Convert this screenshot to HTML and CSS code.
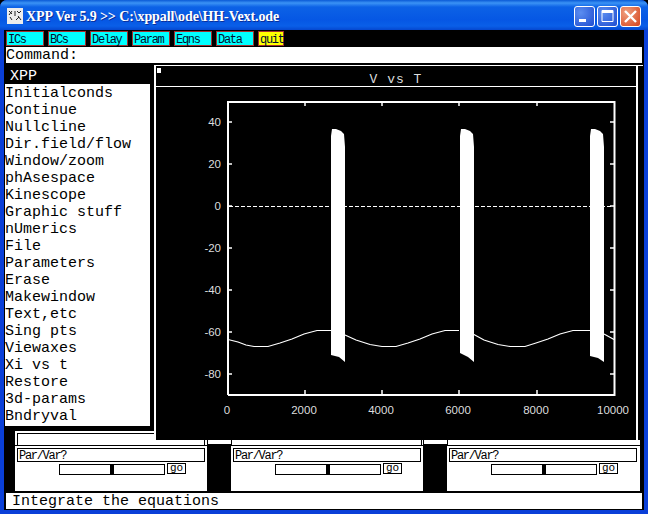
FILE: index.html
```html
<!DOCTYPE html>
<html lang="en">
<head>
<meta charset="utf-8">
<title>XPP Ver 5.9</title>
<link rel="stylesheet" href="styles.css">
</head>
<body>
<div class="window">
  <header class="titlebar">
    <svg class="app-icon" width="16" height="16" viewBox="0 0 16 16"><rect width="16" height="16" fill="#ececec"/><path d="M2 3l3 3M5 3L2 7M3 9l2 3M8 3v5M10 3l2 2 2-2M11 8l3 4M9 12l3-3" stroke="#222" stroke-width="1" fill="none"/></svg>
    <span class="title-text">XPP Ver 5.9 &gt;&gt; C:\xppall\ode\HH-Vext.ode</span>
    <div class="controls">
      <div class="ctl ctl-blue"><svg width="21" height="21" viewBox="0 0 21 21"><rect x="5" y="13" width="7" height="3" fill="#fff"/></svg></div>
      <div class="ctl ctl-blue"><svg width="21" height="21" viewBox="0 0 21 21"><path d="M5 4.500h11v11H5z" fill="none" stroke="#fff"/><rect x="5" y="4" width="11" height="3" fill="#fff"/></svg></div>
      <div class="ctl ctl-red"><svg width="21" height="21" viewBox="0 0 21 21"><path d="M5 5l11 11M16 5L5 16" stroke="#fff" stroke-width="2.400"/></svg></div>
    </div>
  </header>
  <div class="client">
    <div class="toolbar">
      <span class="tool">ICs</span><span class="tool">BCs</span><span class="tool">Delay</span><span class="tool">Param</span><span class="tool">Eqns</span><span class="tool">Data</span><span class="tool tool-quit">quit</span>
    </div>
    <div class="command">Command:</div>
    <div class="main">
      <nav class="menu">
        <div class="menu-head">XPP</div>
        <div class="menu-item">Initialconds</div>
        <div class="menu-item">Continue</div>
        <div class="menu-item">Nullcline</div>
        <div class="menu-item">Dir.field/flow</div>
        <div class="menu-item">Window/zoom</div>
        <div class="menu-item">phAsespace</div>
        <div class="menu-item">Kinescope</div>
        <div class="menu-item">Graphic stuff</div>
        <div class="menu-item">nUmerics</div>
        <div class="menu-item">File</div>
        <div class="menu-item">Parameters</div>
        <div class="menu-item">Erase</div>
        <div class="menu-item">Makewindow</div>
        <div class="menu-item">Text,etc</div>
        <div class="menu-item">Sing pts</div>
        <div class="menu-item">Viewaxes</div>
        <div class="menu-item">Xi vs t</div>
        <div class="menu-item">Restore</div>
        <div class="menu-item">3d-params</div>
        <div class="menu-item">Bndryval</div>
      </nav>
      <section class="graph">
        <svg class="plot" width="490" height="375" viewBox="154 65 490 375">
          <rect x="154" y="65" width="490" height="375" fill="#000"/>
          <path d="M154 65.500H643M156 86.500H637" stroke="#fff" fill="none"/>
          <rect x="636" y="65" width="2" height="375" fill="#fff"/>
          <rect x="157" y="68" width="4" height="5" fill="#fff"/>
          <rect x="154" y="65" width="2" height="375" fill="#fff"/>
          <text class="plot-title" x="396" y="83">V vs T</text>
          <path d="M228 395V102H614.500V395H228" stroke="#fff" stroke-width="2" fill="none"/>
          <path d="M228 122h4M228 164h4M228 206h4M228 248h4M228 290h4M228 332h4M228 374h4M614 122h-4M614 164h-4M614 206h-4M614 248h-4M614 290h-4M614 332h-4M614 374h-4M305 394v-4M382 394v-4M459 394v-4M537 394v-4M305 102v4M382 102v4M459 102v4M537 102v4" stroke="#fff" stroke-width="1.500"/>
          <path class="zero-line" d="M229 206.500H613"/>
          <g class="ylabels">
            <text x="221" y="126">40</text><text x="221" y="168">20</text><text x="221" y="210">0</text><text x="221" y="252">-20</text><text x="221" y="294">-40</text><text x="221" y="336">-60</text><text x="221" y="378">-80</text>
          </g>
          <g class="xlabels">
            <text x="227" y="414">0</text><text x="304" y="414">2000</text><text x="381" y="414">4000</text><text x="458" y="414">6000</text><text x="536" y="414">8000</text><text x="613" y="414">10000</text>
          </g>
          <path class="trace" d="M228 339.500L238 342 246 345 254 346.500 268 346.500 280 343 292 339 304 334 317 330.500 331 330.500M345 335L356 340 370 344.500 382 346.500 396 346.500 408 343 420 339 432 334 445 330.500 459 330.500M473 334L484 340 498 344.500 510 346.500 525 346.500 536 343 548 339 560 334 573 330.500 590 330.500M604 334L614 339.500"/>
          <path class="spike" d="M331 136L332 129 336 129 341 131 344 134 345 147V362L339 357 331 355Z"/>
          <path class="spike" d="M460 136L461 129 465 129 470 131 473 134 474 147V362L468 357 460 353Z"/>
          <path class="spike" d="M590 136L591 129 595 129 600 131 603 134 604 147V362L598 358 590 356Z"/>
        </svg>
      </section>
    </div>
    <div class="sliders">
      <div class="panel-top"><div class="panel-box"></div></div>
      <div class="panel-row">
        <div class="slider-panel">
          <div class="parvar">Par/Var?</div>
          <div class="slider-row"><div class="track"><span class="knob"></span></div><span class="go">go</span></div>
        </div>
        <div class="slider-panel">
          <div class="parvar">Par/Var?</div>
          <div class="slider-row"><div class="track"><span class="knob"></span></div><span class="go">go</span></div>
        </div>
        <div class="slider-panel slider-panel-last">
          <div class="parvar">Par/Var?</div>
          <div class="slider-row"><div class="track"><span class="knob"></span></div><span class="go">go</span></div>
        </div>
      </div>
    </div>
    <div class="status">Integrate the equations</div>
  </div>
</div>
</body>
</html>
```
FILE: styles.css
```css
* { box-sizing: border-box; }
html, body { margin: 0; padding: 0; background: #000; }
body { width: 648px; height: 514px; overflow: hidden; }
.window {
  width: 648px; height: 514px;
  display: flex; flex-direction: column;
  background: #0a3fd8;
  border-radius: 7px 7px 0 0;
  overflow: hidden;
}
.titlebar {
  height: 30px; flex: none;
  display: flex; align-items: center;
  padding: 0 7px 0 7px; gap: 3px;
  background: linear-gradient(#0a5ad6 0, #3b93f5 3px, #0c62e6 7px, #0657e4 20px, #0a5fe8 26px, #0547cf 30px);
}
.app-icon { flex: none; margin-top: 2px; }
.title-text {
  font: bold 14px "Liberation Serif", serif;
  color: #fff; white-space: nowrap; flex: 1;
  letter-spacing: -0.100px;
  margin-top: 3px;
  text-shadow: 1px 1px 0 #0a2f9a;
}
.controls { display: flex; gap: 2px; margin-top: 3px; }
.ctl { width: 21px; height: 21px; border: 1px solid #fff; border-radius: 3px; }
.ctl svg { display: block; margin: -1px; }
.ctl-blue { background: radial-gradient(circle at 30% 30%, #5b8df0, #1f4dd0); }
.ctl-red { background: radial-gradient(circle at 30% 30%, #f0a080, #d5431c); }
.client {
  flex: 1; display: flex; flex-direction: column;
  margin: 0 4px 4px 4px; background: #000;
  min-height: 0;
}
.toolbar { height: 17px; flex: none; display: flex; gap: 4px; padding: 1px 0 0 2px; }
.tool {
  width: 38px; height: 15px; flex: none;
  background: #00ffff; border: 1px solid #a03030;
  font: 12px/17px "Liberation Mono", monospace; color: #001030;
  letter-spacing: -1.300px;
  padding-left: 1px; white-space: nowrap;
}
.tool-quit { width: 26px; background: #ffff00; }
.command {
  height: 16px; flex: none; margin: 0 2px 0 2px;
  background: #fff; color: #000;
  font: 15px/18px "Liberation Mono", monospace;
}
.main { flex: none; height: 368px; display: flex; padding-top: 2px; gap: 4px; align-items: flex-start; }
.menu { width: 145px; margin-left: 1px; margin-top: 1px; background: #fff; flex: none; padding-bottom: 2px; }
.menu-head {
  height: 18px; background: #000; color: #fff;
  font: 15px/22px "Liberation Mono", monospace; padding-left: 5px;
}
.menu-item { height: 17px; font: 15px/19px "Liberation Mono", monospace; color: #000; white-space: pre; }
.graph { flex: none; position: relative; z-index: 2; height: 375px; }
.plot { display: block; }
.plot-title { font: 13px "Liberation Mono", monospace; fill: #ddd; text-anchor: middle; letter-spacing: 1px; }
.ylabels text { font: 11.500px "Liberation Sans", sans-serif; fill: #ddd; text-anchor: end; }
.xlabels text { font: 11.500px "Liberation Sans", sans-serif; fill: #ddd; text-anchor: middle; }
.zero-line { stroke: #fff; stroke-width: 1; stroke-dasharray: 4 2; fill: none; }
.trace { stroke: #fff; stroke-width: 1.200; fill: none; }
.spike { fill: #fff; }
.sliders { flex: none; height: 60px; margin-left: 11px; width: 625px; display: flex; flex-direction: column; }
.panel-top {
  height: 15px; flex: none; padding: 2px 0 0 2px;
  border-bottom: 1px solid #000;
  background-color: #fff;
  background-image:
    linear-gradient(#000, #000), linear-gradient(#000, #000), linear-gradient(#000, #000),
    linear-gradient(#000, #000), linear-gradient(#000, #000), linear-gradient(#000, #000),
    linear-gradient(#000, #000), linear-gradient(#000, #000);
  background-repeat: no-repeat;
  background-size: 1px 5px, 1px 5px, 1px 5px, 1px 5px, 1px 5px, 1px 5px, 24px 2px, 24px 2px;
  background-position: 189px 9px, 192px 9px, 216px 9px, 406px 9px, 408px 9px, 432px 9px, 192px 13px, 408px 13px;
}
.panel-box { height: 12px; border-top: 1px solid #000; border-left: 1px solid #000; }
.panel-row { flex: 1; display: flex; gap: 24px; }
.slider-panel { width: 192px; background: #fff; padding: 2px 2px 0; }
.slider-panel-last { width: 193px; padding-right: 3px; }
.parvar {
  height: 14px; border: 1px solid #000;
  font: 12px/15px "Liberation Mono", monospace; color: #000; padding-left: 1px;
  letter-spacing: -1.300px;
}
.slider-row { display: flex; gap: 2px; margin: 1px 0 0 42px; align-items: flex-start; }
.track { width: 106px; height: 11px; border: 1px solid #000; position: relative; margin-top: 1px; }
.knob { position: absolute; left: 50px; top: 0; width: 4px; height: 9px; background: #000; }
.go { width: 19px; height: 11px; border: 1px solid #000; font: 11px/8px "Liberation Mono", monospace; padding-left: 2px; color: #000; }
.status {
  height: 16px; flex: none; margin: 2px 2px 0 2px;
  background: #fff; color: #000;
  font: 15px/17px "Liberation Mono", monospace; padding-left: 6px;
}
```
